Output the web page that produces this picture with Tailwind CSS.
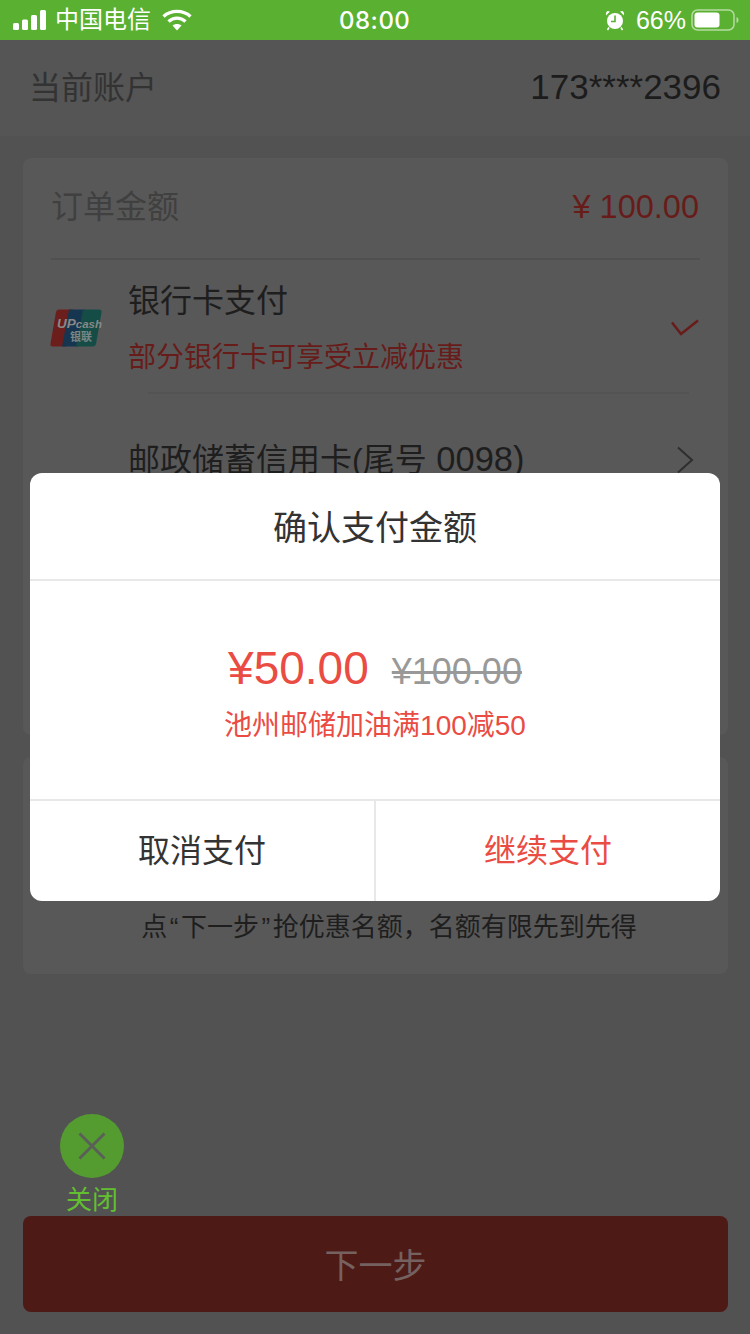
<!DOCTYPE html>
<html lang="zh-CN">
<head>
    <meta charset="UTF-8">
    <meta name="viewport" content="width=device-width, initial-scale=1.0">
    <title>确认支付金额</title>
    <script src="https://cdn.jsdelivr.net/npm/@tailwindcss/browser@4"></script>
</head>
<body class="bg-[#525252] font-['Liberation_Sans','Noto_Sans_CJK_SC',sans-serif]">
<div class="relative w-[750px] h-[1334px] overflow-hidden flex flex-col">

    <!-- status bar -->
    <div class="h-[40px] shrink-0 bg-[#5ab031] text-white relative flex items-center justify-between pl-[13px] pr-[11px]">
        <div class="flex items-center">
            <svg width="33" height="20" viewBox="0 0 33 20" fill="#fff">
                <rect x="0" y="13" width="6" height="7" rx="1.5"/>
                <rect x="9" y="9.5" width="6" height="10.5" rx="1.5"/>
                <rect x="18" y="5" width="6" height="15" rx="1.5"/>
                <rect x="27" y="0" width="6" height="20" rx="1.5"/>
            </svg>
            <span class="ml-[9px] text-[24px] leading-none">中国电信</span>
            <svg class="ml-[11px]" width="30" height="22" viewBox="0 0 30 22" fill="none" stroke="#fff" stroke-width="3.4">
                <path d="M1.5 7.5C9 .7 21 .7 28.500 7.500"/>
                <path d="M6.500 12.500C11.500 8 18.500 8 23.500 12.500"/>
                <path d="M15 21.500 10.500 16.500C13 14.500 17 14.500 19.500 16.500Z" fill="#fff" stroke="none"/>
            </svg>
        </div>
        <span class="absolute left-[339px] top-[7px] font-['Inter'] text-[24px] leading-[28px] font-medium tracking-[0.5px]">08:00</span>
        <div class="flex items-center">
            <svg width="20" height="21" viewBox="0 0 20 21" fill="#fff" class="-ml-[1px]">
                <circle cx="10" cy="11" r="8"/>
                <path d="M1 5.500 5 1.500 2.500 1Q.5 2 1 5.500ZM19 5.500 15 1.500 17.500 1Q19.500 2 19 5.500Z"/>
                <path d="M4 17.500 2.500 20M16 17.500 17.500 20" stroke="#fff" stroke-width="1.500"/>
                <path d="M10 5.500V11.500H6" fill="none" stroke="#5ab031" stroke-width="1.600"/>
            </svg>
            <span class="ml-[11px] text-[25px] leading-none">66%</span>
            <svg class="ml-[5px]" width="48" height="24" viewBox="0 0 48 24" fill="none">
                <rect x="1" y="2" width="42" height="20" rx="5.500" stroke="#fff" stroke-opacity=".55" stroke-width="1.500"/>
                <rect x="3.500" y="4.500" width="25" height="15" rx="3" fill="#fff"/>
                <path d="M45.500 9v6c1.300-.5 2-1.500 2-3s-.7-2.500-2-3Z" fill="#fff" fill-opacity=".55"/>
            </svg>
        </div>
    </div>

    <!-- current account -->
    <div class="h-[96px] shrink-0 bg-[#555555] flex items-center justify-between pl-[29px] pr-[29px]">
        <span class="text-[32px] text-[#333333]">当前账户</span>
        <span class="text-[35px] text-[#1c1c1c] -mt-[2px]">173****2396</span>
    </div>

    <!-- order card -->
    <div class="mt-[22px] ml-[23px] w-[705px] h-[577px] shrink-0 rounded-[8px] bg-[#585858] px-[28px]">
        <div class="h-[102px] border-b-2 border-[#505050] flex items-center justify-between pr-[1px]">
            <span class="text-[32px] text-[#404040] -mt-[2px]">订单金额</span>
            <span class="text-[32.500px] text-[#681c1a] -mt-[2px]">¥ 100.00</span>
        </div>
        <div class="h-[132px] relative flex items-center">
            <svg width="52" height="38" viewBox="0 0 52 38" class="shrink-0 -ml-[1px] mt-[4px]">
                <path d="M9 .5h14L16 37.500H3c-2 0-3-1-2.500-3L6 3C6.500 1.500 7.500.5 9 .5Z" fill="#6c1e1c"/>
                <path d="M19 .5h16l-7 37H12Z" fill="#163550"/>
                <path d="M33 .5h16c2 0 3 1 2.500 3L46 35c-.5 1.500-1.500 2.500-3 2.500H26Z" fill="#164c46"/>
                <text x="7" y="19" font-size="13.500" font-weight="700" font-style="italic" fill="#888888">UP<tspan font-size="11.500">cash</tspan></text>
                <text x="20" y="32" font-size="11" font-weight="700" fill="#7a8684">银联</text>
            </svg>
            <div class="ml-[26px] mt-[6px]">
                <div class="text-[32px] leading-[40px] text-[#1e1e1e]">银行卡支付</div>
                <div class="text-[28px] leading-[40px] text-[#681c1a] mt-[17px]">部分银行卡可享受立减优惠</div>
            </div>
            <svg class="absolute right-[1px] top-[59px]" width="28" height="18" viewBox="0 0 28 18" fill="none" stroke="#681c1a" stroke-width="2.500">
                <path d="M1 3.500 10 15 27 1.500"/>
            </svg>
        </div>
        <div class="ml-[97px] mr-[11px] h-[2px] bg-[#535353]"></div>
        <div class="h-[130px] relative flex pl-[77px] pt-[45px]">
            <span class="text-[32px] leading-[40px] text-[#1e1e1e]">邮政储蓄信用卡(尾号<span class="text-[34.500px]"> 0098)</span></span>
            <svg class="absolute right-[4px] top-[52px]" width="20" height="28" viewBox="0 0 20 28" fill="none" stroke="#2e2e2e" stroke-width="2">
                <path d="M2 1.500 16 14 2 26.500"/>
            </svg>
        </div>
    </div>

    <!-- promo card -->
    <div class="mt-[22px] ml-[23px] w-[705px] h-[217px] shrink-0 rounded-[8px] bg-[#585858] flex items-end justify-center pb-[29px] pl-[27px]">
        <span class="text-[26px] leading-[36px] text-[#1e1e1e]">点<span class="mx-[2.500px]">“</span>下一步<span class="mx-[2.500px]">”</span>抢优惠名额，名额有限先到先得</span>
    </div>

    <!-- close button + next -->
    <div class="mt-[140px] ml-[60px] w-[64px] shrink-0 flex flex-col items-center">
        <div class="w-[64px] h-[64px] rounded-full bg-[#559c30] flex items-center justify-center">
            <svg width="28" height="28" viewBox="0 0 28 28" stroke="#5a5f58" stroke-width="3">
                <path d="M1.500 1.500 26.500 26.500M26.500 1.500 1.500 26.500"/>
            </svg>
        </div>
        <span class="pt-[6px] text-[26px] leading-[32px] text-[#62c030] whitespace-nowrap">关闭</span>
    </div>
    <div class="ml-[23px] w-[705px] h-[96px] shrink-0 rounded-[8px] bg-[#4d1a16] flex items-center justify-center pt-[5px]">
        <span class="text-[34px] text-[#756160]">下一步</span>
    </div>

    <!-- modal over the page -->
    <div class="absolute left-[30px] top-[473px] w-[690px] h-[428px] rounded-[12px] bg-white flex flex-col overflow-hidden">
        <div class="h-[106px] shrink-0 flex items-center justify-center pt-[4px] text-[34px] text-[#333333]">确认支付金额</div>
        <div class="h-[2px] shrink-0 bg-[#e8e8e8]"></div>
        <div class="h-[218px] shrink-0 flex flex-col items-center pt-[56px]">
            <div class="flex items-baseline h-[62px]">
                <span class="text-[46px] leading-[62px] text-[#ea4c43]">¥50.00</span>
                <span class="ml-[23px] text-[36px] leading-[62px] text-[#999999] line-through">¥100.00</span>
            </div>
            <div class="mt-[7px] text-[28px] leading-[40px] text-[#ea4c43]">池州邮储加油满100减50</div>
        </div>
        <div class="h-[2px] shrink-0 bg-[#e8e8e8]"></div>
        <div class="flex-1 flex">
            <div class="flex-1 flex items-center justify-center text-[32px] text-[#333333]">取消支付</div>
            <div class="w-[2px] bg-[#e8e8e8]"></div>
            <div class="flex-1 flex items-center justify-center text-[32px] text-[#ea4c43]">继续支付</div>
        </div>
    </div>
</div>
</body>
</html>
